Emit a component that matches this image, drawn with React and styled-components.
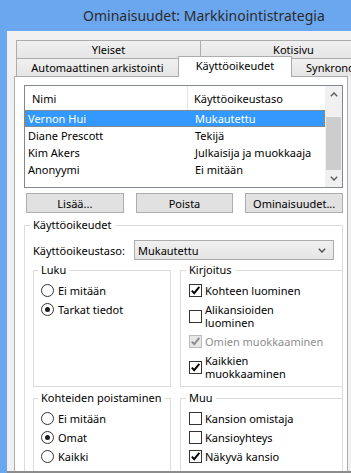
import React from 'react';
import styled, { createGlobalStyle } from 'styled-components';

const Global = createGlobalStyle`
  html, body { margin: 0; padding: 0; background: #fff; }
  body { font-family: "Noto Sans", "Open Sans", sans-serif; font-size: 11px; color: #000; }
  * { box-sizing: border-box; }
`;

const Window = styled.div`
  width: 351px;
  height: 473px;
  overflow: hidden;
  background: #6ba7ef;
  display: flex;
  flex-direction: column;
`;

const TitleBar = styled.div`
  height: 31px;
  flex: 0 0 31px;
  line-height: 31px;
  padding-left: 83px;
  font-size: 14px;
  color: #2b2b2b;
  white-space: nowrap;
`;

const Body = styled.div`
  flex: 1;
  margin-left: 7px;
  background: #f0f0f0;
  padding: 9px 0 0 7px;
  border-bottom: 2px solid #8c8c8c;
  overflow: hidden;
`;

const TabStrip = styled.div`
  padding-left: 2px;
  display: flex;
  flex-direction: column;
`;

const TabRow = styled.div`
  display: flex;
  height: 18px;
  align-items: flex-start;
`;

const Tab = styled.div`
  position: relative;
  flex: 0 0 ${p => p.$w}px;
  height: ${p => (p.$active ? 21 : 18)}px;
  margin-top: ${p => (p.$active ? -2 : 0)}px;
  margin-left: ${p => (p.$first ? 0 : -1)}px;
  z-index: ${p => (p.$active ? 2 : 0)};
  border: 1px solid #acacac;
  border-bottom: none;
  background: ${p => (p.$active ? '#ffffff' : 'linear-gradient(#f0f0f0, #e5e5e5)')};
  display: flex;
  align-items: center;
  justify-content: ${p => (p.$left ? 'flex-start' : 'center')};
  padding-left: ${p => (p.$left ? 14 : 0)}px;
  padding-bottom: ${p => (p.$active ? 2 : 0)}px;
  white-space: nowrap;
  line-height: 14px;
`;

const Panel = styled.div`
  position: relative;
  z-index: 1;
  width: 334px;
  height: 420px;
  background: #fff;
  border: 1px solid #acacac;
  padding: 8px 4px 0 9px;
`;

const ListBox = styled.div`
  width: 319px;
  height: 103px;
  border: 1px solid #828790;
  display: flex;
  background: #fff;
`;

const ListContent = styled.div`
  flex: 1;
  display: flex;
  flex-direction: column;
`;

const HeaderRow = styled.div`
  height: 24px;
  display: flex;
  align-items: stretch;
`;

const HeaderCell = styled.div`
  display: flex;
  align-items: center;
  flex: ${p => (p.$w ? `0 0 ${p.$w}px` : '1')};
  padding-left: ${p => p.$pl}px;
  border-right: ${p => (p.$w ? '1px solid #e5e5e5' : 'none')};
  white-space: nowrap;
`;

const Row = styled.div`
  height: 17px;
  display: flex;
  align-items: center;
  background: ${p => (p.$selected ? '#3399ff' : 'transparent')};
  color: ${p => (p.$selected ? '#fff' : '#000')};
  outline: ${p => (p.$selected ? '1px dotted #c27a2e' : 'none')};
  outline-offset: -1px;
  white-space: nowrap;
`;

const Cell = styled.div`
  flex: ${p => (p.$w ? `0 0 ${p.$w}px` : '1')};
  padding-left: ${p => p.$pl}px;
`;

const ScrollBar = styled.div`
  flex: 0 0 17px;
  background: #f0f0f0;
  display: flex;
  flex-direction: column;
`;

const ScrollBtn = styled.div`
  height: 17px;
  flex: 0 0 17px;
  display: flex;
  align-items: center;
  justify-content: center;
`;

const Track = styled.div`
  flex: 1;
  padding: 14px 1px 0 1px;
  display: flex;
`;

const Thumb = styled.div`
  flex: 1;
  height: 53px;
  background: #cdcdcd;
`;

const ButtonRow = styled.div`
  display: flex;
  gap: 12px;
  margin-top: 5px;
  padding-left: 2px;
  width: 319px;
`;

const Button = styled.div`
  flex: 1;
  height: 20px;
  background: #e1e1e1;
  border: 1px solid #adadad;
  display: flex;
  align-items: center;
  justify-content: center;
  white-space: nowrap;
`;

const Group = styled.div`
  border: 1px solid #dcdcdc;
  margin-top: ${p => p.$mt || 0}px;
  padding: 0 ${p => p.$pr}px ${p => p.$pb}px ${p => p.$pl}px;
  width: ${p => (p.$w ? `${p.$w}px` : 'auto')};
`;

const Legend = styled.div`
  display: table;
  margin: -8px 0 0 -3px;
  padding: 0 3px;
  background: #fff;
  line-height: 14px;
  white-space: nowrap;
`;

const LevelRow = styled.div`
  margin-top: 8px;
  height: 20px;
  display: flex;
  align-items: center;
  justify-content: space-between;
`;

const Select = styled.div`
  width: 200px;
  height: 20px;
  border: 1px solid #acacac;
  background: linear-gradient(#f0f0f0, #e5e5e5);
  display: flex;
  align-items: center;
  justify-content: space-between;
  padding: 0 7px 0 3px;
`;

const SubGrid = styled.div`
  margin-top: 10px;
  display: grid;
  grid-template-columns: 138px 163px;
  column-gap: 9px;
  row-gap: 11px;
`;

const Items = styled.div`
  display: flex;
  flex-direction: column;
  gap: 6px;
  padding-top: 7px;
`;

const Item = styled.div`
  display: flex;
  align-items: center;
  gap: ${p => p.$gap || 3}px;
  line-height: 13px;
  color: ${p => (p.$disabled ? '#8d8d8d' : '#000')};
  white-space: nowrap;
`;

const RadioCircle = styled.div`
  flex: 0 0 13px;
  width: 13px;
  height: 13px;
  border-radius: 50%;
  border: 1px solid #333;
  background: #fff;
  display: flex;
  align-items: center;
  justify-content: center;
  &::after {
    content: '';
    width: 5px;
    height: 5px;
    border-radius: 50%;
    background: ${p => (p.$checked ? '#1a1a1a' : 'transparent')};
  }
`;

const Box = styled.div`
  flex: 0 0 13px;
  width: 13px;
  height: 13px;
  border: 1px solid ${p => (p.$disabled ? '#bcbcbc' : '#333')};
  background: ${p => (p.$disabled ? '#e6e6e6' : '#fff')};
  display: flex;
  align-items: center;
  justify-content: center;
`;

const Chevron = ({ up, color = '#606060' }) => (
  <svg width="8" height="5" viewBox="0 0 8 5">
    <polyline
      points={up ? '0.8,4.2 4,1 7.2,4.2' : '0.8,0.8 4,4 7.2,0.8'}
      fill="none"
      stroke={color}
      strokeWidth="1.5"
    />
  </svg>
);

const Radio = ({ checked, children }) => (
  <Item $gap={4}>
    <RadioCircle $checked={checked} />
    <span>{children}</span>
  </Item>
);

const Check = ({ checked, disabled, children }) => (
  <Item $disabled={disabled}>
    <Box $disabled={disabled}>
      {checked && (
        <svg width="11" height="11" viewBox="0 0 11 11">
          <polyline
            points="1.8,5.6 4.2,8.2 9.3,1.8"
            fill="none"
            stroke={disabled ? '#8d8d8d' : '#000'}
            strokeWidth="1.9"
          />
        </svg>
      )}
    </Box>
    <span>{children}</span>
  </Item>
);

const rows = [
  ['Vernon Hui', 'Mukautettu', true],
  ['Diane Prescott', 'Tekijä'],
  ['Kim Akers', 'Julkaisija ja muokkaaja'],
  ['Anonyymi', 'Ei mitään'],
];

export default function App() {
  return (
    <>
      <Global />
      <Window>
        <TitleBar>Ominaisuudet: Markkinointistrategia</TitleBar>
        <Body>
          <TabStrip>
            <TabRow>
              <Tab $w={185} $first>Yleiset</Tab>
              <Tab $w={187}>Kotisivu</Tab>
            </TabRow>
            <TabRow>
              <Tab $w={163} $first>Automaattinen arkistointi</Tab>
              <Tab $w={114} $active>Käyttöoikeudet</Tab>
              <Tab $w={100} $left>Synkronointi</Tab>
            </TabRow>
          </TabStrip>
          <Panel>
            <ListBox>
              <ListContent>
                <HeaderRow>
                  <HeaderCell $w={163} $pl={7}>Nimi</HeaderCell>
                  <HeaderCell $pl={6}>Käyttöoikeustaso</HeaderCell>
                </HeaderRow>
                {rows.map(([n, l, s]) => (
                  <Row key={n} $selected={s}>
                    <Cell $w={166} $pl={3}>{n}</Cell>
                    <Cell $pl={4}>{l}</Cell>
                  </Row>
                ))}
              </ListContent>
              <ScrollBar>
                <ScrollBtn><Chevron up /></ScrollBtn>
                <Track><Thumb /></Track>
                <ScrollBtn><Chevron /></ScrollBtn>
              </ScrollBar>
            </ListBox>
            <ButtonRow>
              <Button>Lisää...</Button>
              <Button>Poista</Button>
              <Button>Ominaisuudet...</Button>
            </ButtonRow>
            <Group $mt={12} $pl={8} $pr={8} $pb={10} $w={319}>
              <Legend>Käyttöoikeudet</Legend>
              <LevelRow>
                <span>Käyttöoikeustaso:</span>
                <Select>
                  <span>Mukautettu</span>
                  <Chevron color="#555" />
                </Select>
              </LevelRow>
              <SubGrid>
                <Group $pl={7} $pr={7} $pb={6}>
                  <Legend>Luku</Legend>
                  <Items>
                    <Radio>Ei mitään</Radio>
                    <Radio checked>Tarkat tiedot</Radio>
                  </Items>
                </Group>
                <Group $pl={8} $pr={6} $pb={6}>
                  <Legend>Kirjoitus</Legend>
                  <Items>
                    <Check checked>Kohteen luominen</Check>
                    <Check>Alikansioiden<br />luominen</Check>
                    <Check checked disabled>Omien muokkaaminen</Check>
                    <Check checked>Kaikkien<br />muokkaaminen</Check>
                  </Items>
                </Group>
                <Group $pl={7} $pr={7} $pb={8}>
                  <Legend>Kohteiden poistaminen</Legend>
                  <Items>
                    <Radio>Ei mitään</Radio>
                    <Radio checked>Omat</Radio>
                    <Radio>Kaikki</Radio>
                  </Items>
                </Group>
                <Group $pl={8} $pr={6} $pb={8}>
                  <Legend>Muu</Legend>
                  <Items>
                    <Check>Kansion omistaja</Check>
                    <Check>Kansioyhteys</Check>
                    <Check checked>Näkyvä kansio</Check>
                  </Items>
                </Group>
              </SubGrid>
            </Group>
          </Panel>
        </Body>
      </Window>
    </>
  );
}
